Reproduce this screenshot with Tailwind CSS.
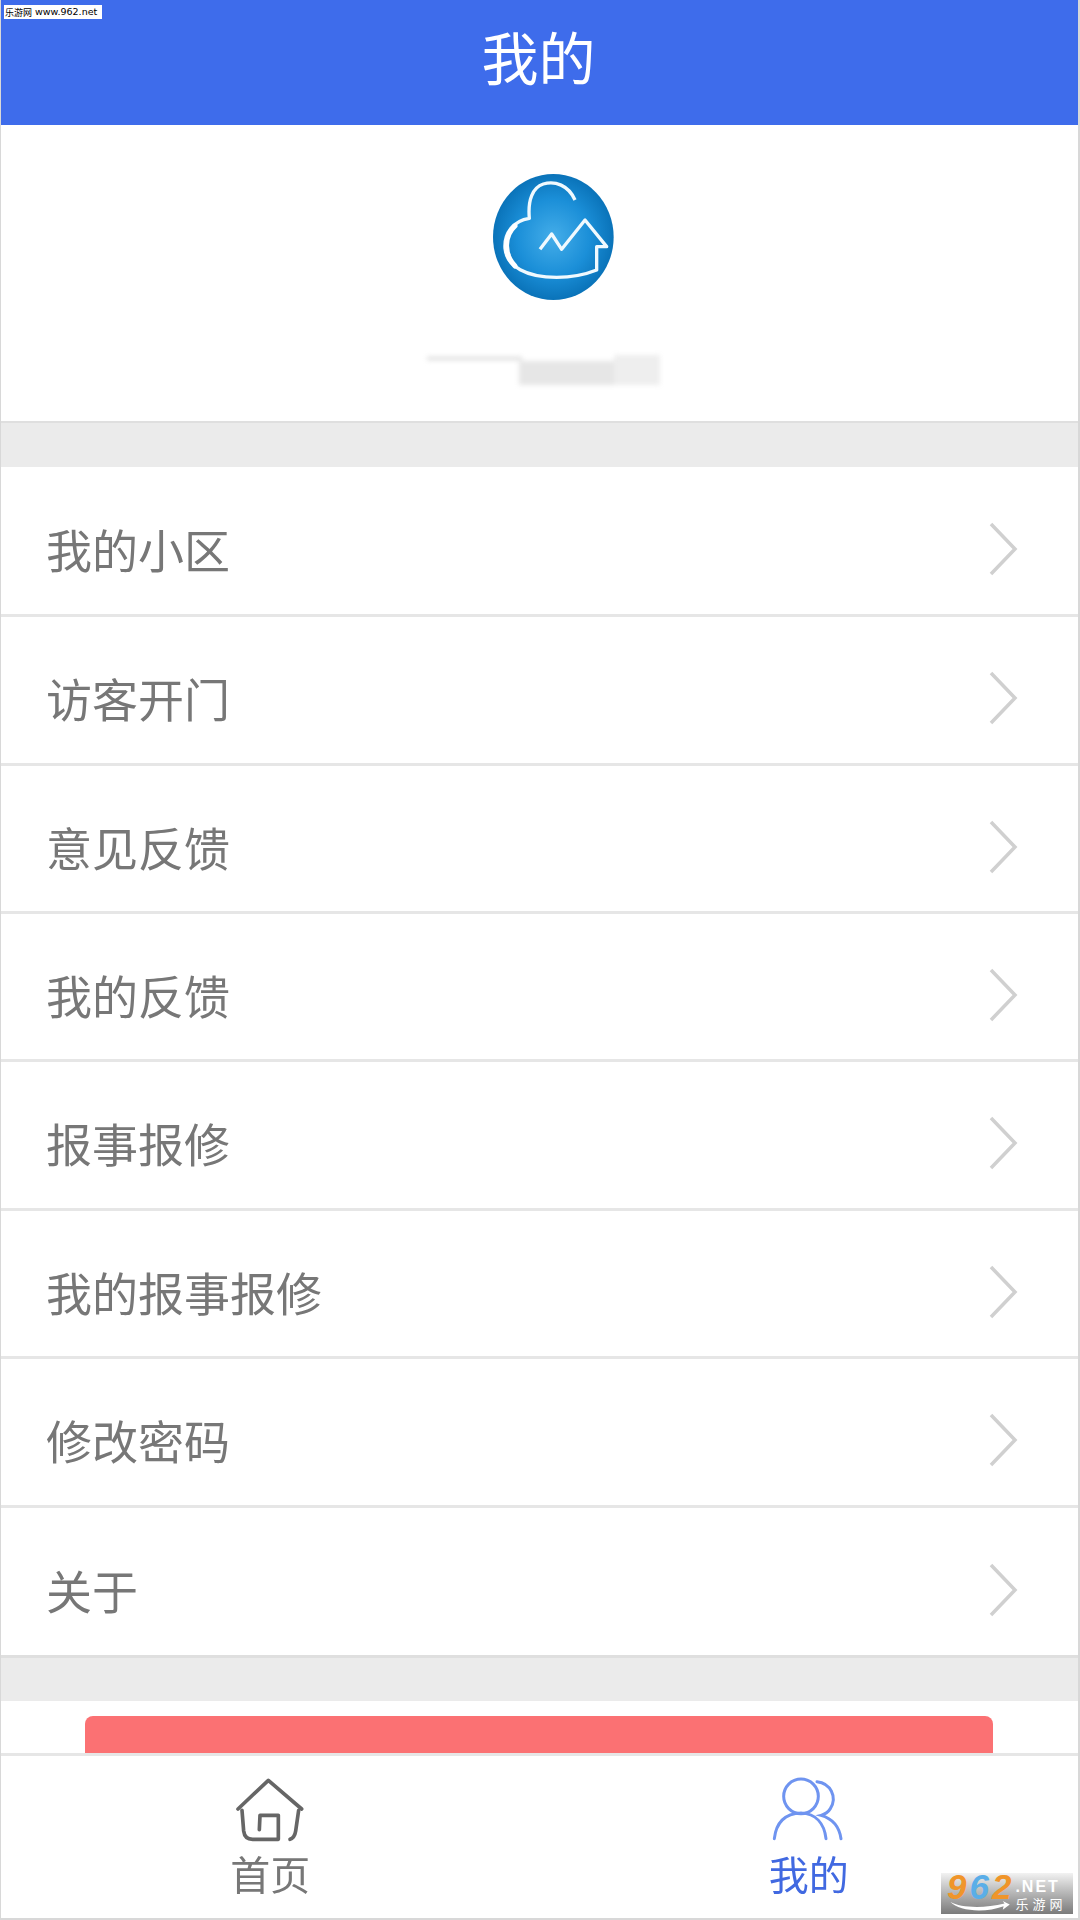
<!DOCTYPE html>
<html lang="zh-CN">

<head>
  <meta charset="UTF-8" />
  <meta name="viewport" content="width=device-width, initial-scale=1.0" />
  <title>我的</title>
  <script src="https://cdn.jsdelivr.net/npm/@tailwindcss/browser@4"></script>
</head>

<body class="bg-white font-['Noto_Sans_CJK_SC','Noto_Sans',sans-serif]">

  <div class="relative w-[1080px] h-[1920px] overflow-hidden flex flex-col bg-white border-l border-r-2 border-[#d8d8d8]">

    <!-- Header -->
    <header class="h-[125px] shrink-0 bg-[#3e6ceb] flex items-center justify-center pb-[15px]">
      <h1 class="text-[57px] leading-none text-white blur-[0.7px] -ml-[2px]">我的</h1>
    </header>

    <!-- Profile -->
    <section class="h-[296px] shrink-0 flex flex-col items-center pt-[49px]">
      <svg class="w-[200px] h-[170px] -mt-[24px] ml-[41px] blur-[0.6px]" viewBox="0 0 600 510" fill="none">
        <defs>
          <radialGradient id="logoFill" cx="0.5" cy="0.5" r="0.5">
            <stop offset="0" stop-color="#44ade9" />
            <stop offset="0.6" stop-color="#1b8fd8" />
            <stop offset="1" stop-color="#0a73b9" />
          </radialGradient>
        </defs>
        <ellipse cx="280" cy="261" rx="181" ry="189" fill="url(#logoFill)" />
        <path d="M345 150C325 105 285 92 250 102C218 112 203 150 208 205C160 212 132 250 135 295C140 350 200 382 290 382C335 382 380 372 410 360V290H440L375 210L305 298L275 252L240 298" stroke="#f0f9fe" stroke-width="10" stroke-linejoin="round" />
        <path d="M165 228C135 255 128 310 165 348" stroke="#ffffff" stroke-width="15" stroke-linecap="round" />
      </svg>
      <!-- Smudged user name -->
      <div class="relative w-[234px] h-[43px] mt-[27px] ml-[8px] blur-[2.5px]">
        <div class="absolute left-0 top-[10px] w-[95px] h-[3px] bg-[#d8d8d8]"></div>
        <div class="absolute left-[92px] top-[14px] w-[95px] h-[24px] bg-[#e6e6e6]"></div>
        <div class="absolute left-[187px] top-[8px] w-[46px] h-[30px] bg-[#eeeeee]"></div>
      </div>
    </section>

    <div class="h-[46px] shrink-0 bg-[#ebebeb] border-t-2 border-[#dfdfdf]"></div>

    <!-- Menu -->
    <ul class="shrink-0 text-[46px] leading-none text-[#777777]">
      <li class="h-[150px] flex items-center justify-between pl-[45px] pr-[60px] pt-[16px] border-b-[3px] border-[#e6e6e6]">
        <span class="blur-[0.6px] -mt-[2px]">我的小区</span>
        <svg class="w-[30px] h-[56px] blur-[0.5px]" viewBox="0 0 30 56" fill="none" stroke="#d0d0d0" stroke-width="3.5"><path d="M3 3L27 28L3 53" /></svg>
      </li>
      <li class="h-[149px] flex items-center justify-between pl-[45px] pr-[60px] pt-[16px] border-b-[3px] border-[#e6e6e6]">
        <span class="blur-[0.6px] -mt-[2px]">访客开门</span>
        <svg class="w-[30px] h-[56px] blur-[0.5px]" viewBox="0 0 30 56" fill="none" stroke="#d0d0d0" stroke-width="3.5"><path d="M3 3L27 28L3 53" /></svg>
      </li>
      <li class="h-[148px] flex items-center justify-between pl-[45px] pr-[60px] pt-[16px] border-b-[3px] border-[#e6e6e6]">
        <span class="blur-[0.6px] -mt-[2px]">意见反馈</span>
        <svg class="w-[30px] h-[56px] blur-[0.5px]" viewBox="0 0 30 56" fill="none" stroke="#d0d0d0" stroke-width="3.5"><path d="M3 3L27 28L3 53" /></svg>
      </li>
      <li class="h-[148px] flex items-center justify-between pl-[45px] pr-[60px] pt-[16px] border-b-[3px] border-[#e6e6e6]">
        <span class="blur-[0.6px] -mt-[2px]">我的反馈</span>
        <svg class="w-[30px] h-[56px] blur-[0.5px]" viewBox="0 0 30 56" fill="none" stroke="#d0d0d0" stroke-width="3.5"><path d="M3 3L27 28L3 53" /></svg>
      </li>
      <li class="h-[149px] flex items-center justify-between pl-[45px] pr-[60px] pt-[16px] border-b-[3px] border-[#e6e6e6]">
        <span class="blur-[0.6px] -mt-[2px]">报事报修</span>
        <svg class="w-[30px] h-[56px] blur-[0.5px]" viewBox="0 0 30 56" fill="none" stroke="#d0d0d0" stroke-width="3.5"><path d="M3 3L27 28L3 53" /></svg>
      </li>
      <li class="h-[148px] flex items-center justify-between pl-[45px] pr-[60px] pt-[16px] border-b-[3px] border-[#e6e6e6]">
        <span class="blur-[0.6px] -mt-[2px]">我的报事报修</span>
        <svg class="w-[30px] h-[56px] blur-[0.5px]" viewBox="0 0 30 56" fill="none" stroke="#d0d0d0" stroke-width="3.5"><path d="M3 3L27 28L3 53" /></svg>
      </li>
      <li class="h-[149px] flex items-center justify-between pl-[45px] pr-[60px] pt-[16px] border-b-[3px] border-[#e6e6e6]">
        <span class="blur-[0.6px] -mt-[2px]">修改密码</span>
        <svg class="w-[30px] h-[56px] blur-[0.5px]" viewBox="0 0 30 56" fill="none" stroke="#d0d0d0" stroke-width="3.5"><path d="M3 3L27 28L3 53" /></svg>
      </li>
      <li class="h-[150px] flex items-center justify-between pl-[45px] pr-[60px] pt-[16px] border-b-[3px] border-[#dfdfdf]">
        <span class="blur-[0.6px] -mt-[2px]">关于</span>
        <svg class="w-[30px] h-[56px] blur-[0.5px]" viewBox="0 0 30 56" fill="none" stroke="#d0d0d0" stroke-width="3.5"><path d="M3 3L27 28L3 53" /></svg>
      </li>
    </ul>

    <div class="h-[43px] shrink-0 bg-[#ebebeb]"></div>

    <!-- Logout button, cut off by the tab bar -->
    <div class="h-[52px] shrink-0 pt-[15px] pl-[84px] pr-[85px]">
      <div class="h-full bg-[#fb7173] rounded-t-[8px]"></div>
    </div>

    <!-- Tab bar -->
    <nav class="flex-1 grid grid-cols-2 border-t-[3px] border-[#e6e6e6] border-b-2 border-b-[#d8d8d8]">
      <a class="flex flex-col items-center pt-[21px] text-[#777777]">
        <svg class="w-[70px] h-[65px] blur-[0.6px]" viewBox="105 50 210 195" fill="none" stroke="#666666" stroke-width="11" stroke-linejoin="round" stroke-linecap="round">
          <path d="M114 146L205 60L305 146" />
          <path d="M126 150L131 212Q134 237 158 237H235V165H180L178 208" />
          <path d="M296 150L287 212Q284 232 270 237" />
        </svg>
        <span class="text-[40px] leading-none mt-[11px] blur-[0.6px]">首页</span>
      </a>
      <a class="flex flex-col items-center pt-[21px] text-[#4169e1]">
        <svg class="w-[75px] h-[65px] blur-[0.6px]" viewBox="90 50 225 195" fill="none" stroke="#6f94f0" stroke-width="9" stroke-linecap="round">
          <circle cx="180" cy="108" r="52" />
          <path d="M100 235C105 190 130 160 180 158C225 160 250 190 255 235" />
          <path d="M228 64C268 68 290 110 268 145C262 155 252 162 240 165C275 175 295 200 300 235" />
        </svg>
        <span class="text-[40px] leading-none mt-[11px] blur-[0.6px]">我的</span>
      </a>
    </nav>

    <!-- Site watermarks -->
    <div class="absolute left-[3px] top-[5px] w-[98px] h-[14px] bg-white flex items-center whitespace-nowrap text-black text-[9px] leading-none pl-[1px]">
      乐游网<span class="ml-[3px] text-[9.5px] font-['DejaVu_Sans',sans-serif]">www.962.net</span>
    </div>
    <div class="absolute right-[5px] bottom-[6px] w-[132px] h-[41px] bg-gradient-to-b from-[#f2f2f2] to-[#7b7b7b] flex pl-[6px] leading-none">
      <span class="text-[35px] leading-[27px] h-[27px] font-bold italic tracking-[3px] font-['Liberation_Sans',sans-serif]"><span class="text-[#f0952a]">9</span><span class="text-[#5aaee8]">6</span><span class="text-[#f0952a]">2</span></span>
      <div class="flex flex-col items-start ml-[1px] mt-[6px] text-white">
        <span class="text-[16px] font-bold tracking-[2px] font-['Liberation_Sans',sans-serif]">.NET</span>
        <span class="text-[13px] tracking-[4px] mt-[2px]">乐游网</span>
      </div>
      <svg class="absolute left-[5px] bottom-0 w-[68px] h-[14px]" viewBox="0 0 68 16" fill="#ffffff"><path d="M0 2C12 9 38 10 62 4L60 1L68 5L60 11L61 7C40 15 10 13 0 2Z" /></svg>
    </div>

  </div>

</body>

</html>
